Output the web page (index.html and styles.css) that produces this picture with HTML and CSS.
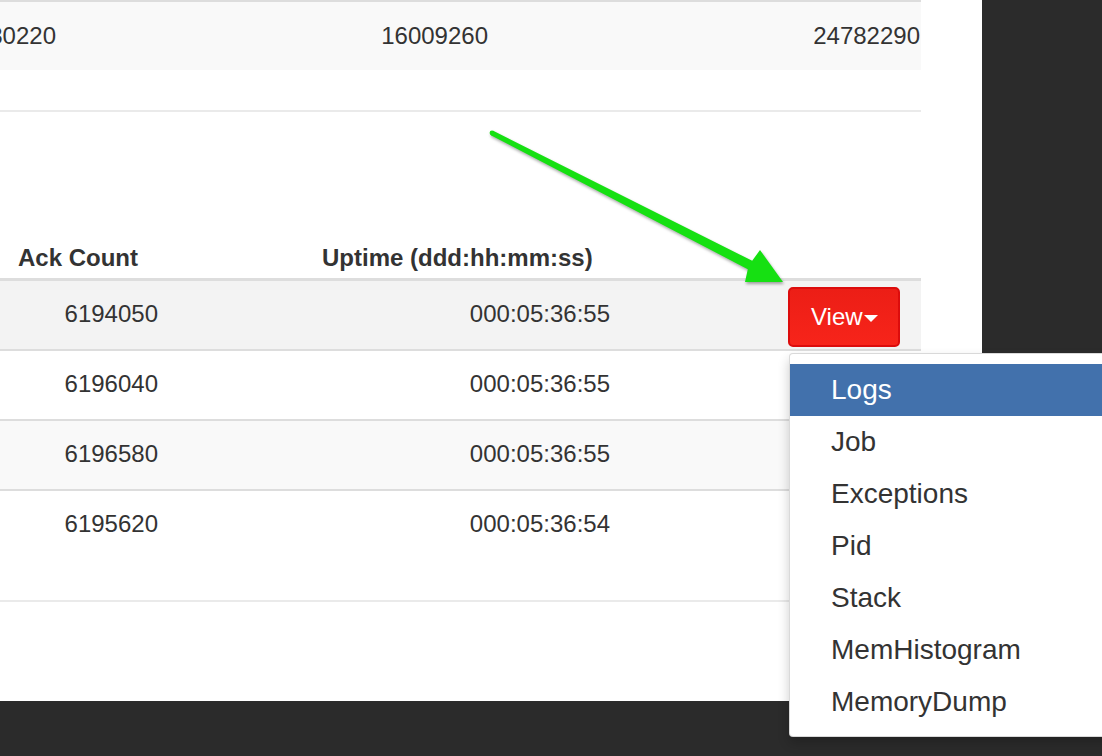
FILE: index.html
```html
<!DOCTYPE html>
<html lang="en">
<head>
<meta charset="utf-8">
<title>Topology workers</title>
<link rel="stylesheet" href="styles.css">
</head>
<body>
<div class="screen">
  <main class="content">
    <section class="panel">
      <div class="summary-row">
        <div class="cell cut">1580220</div>
        <div class="cell">16009260</div>
        <div class="cell">24782290</div>
      </div>
      <div class="summary-gap"></div>

      <div class="table">
        <div class="thead">
          <div class="th th-ack">Ack Count</div>
          <div class="th th-up">Uptime (ddd:hh:mm:ss)</div>
          <div class="th"></div>
        </div>

        <div class="tr tr-hover">
          <div class="td td-ack">6194050</div>
          <div class="td td-up">000:05:36:55</div>
          <div class="td td-action">
            <div class="dropdown">
              <button class="btn-view" type="button">View<span class="caret"></span></button>
              <ul class="menu">
                <li class="menu-item active">Logs</li>
                <li class="menu-item">Job</li>
                <li class="menu-item">Exceptions</li>
                <li class="menu-item">Pid</li>
                <li class="menu-item">Stack</li>
                <li class="menu-item">MemHistogram</li>
                <li class="menu-item">MemoryDump</li>
              </ul>
            </div>
          </div>
        </div>

        <div class="tr">
          <div class="td td-ack">6196040</div>
          <div class="td td-up">000:05:36:55</div>
          <div class="td td-action"></div>
        </div>

        <div class="tr tr-striped">
          <div class="td td-ack">6196580</div>
          <div class="td td-up">000:05:36:55</div>
          <div class="td td-action"></div>
        </div>

        <div class="tr tr-last">
          <div class="td td-ack">6195620</div>
          <div class="td td-up">000:05:36:54</div>
          <div class="td td-action"></div>
        </div>
      </div>

      <div class="panel-end"></div>
    </section>
  </main>
  <aside class="side"></aside>
  <footer class="footer"></footer>
</div>

<svg class="arrow" width="1102" height="756" viewBox="0 0 1102 756" aria-hidden="true">
  <polygon fill="#16e012" points="493.2,130.8 752.2,260.8 760,250 783,282 745,282 747.8,269.2 490.8,135.2"/>
  <circle cx="492" cy="133" r="2.4" fill="#16e012"/>
</svg>
</body>
</html>
```

FILE: styles.css
```css
* {
  box-sizing: border-box;
}

html, body {
  margin: 0;
  padding: 0;
}

body {
  width: 1102px;
  height: 756px;
  overflow: hidden;
  position: relative;
  background: #2b2b2b;
  font-family: "Liberation Sans", Arial, Helvetica, sans-serif;
  color: #333333;
}

.screen {
  display: grid;
  grid-template-columns: 982px 1fr;
  grid-template-rows: 701px 55px;
  height: 756px;
}

.content {
  grid-column: 1;
  grid-row: 1;
  background: #ffffff;
}

.side {
  grid-column: 2;
  grid-row: 1;
  background: #2b2b2b;
}

.footer {
  grid-column: 1 / span 2;
  grid-row: 2;
  background: #2b2b2b;
}

.panel {
  width: 921px;
}

/* summary row (top) */
.summary-row {
  display: grid;
  grid-template-columns: 57px 432px 1fr;
  align-items: center;
  height: 70px;
  border-top: 2px solid #dddddd;
  background: #f9f9f9;
  font-size: 24px;
}

.cell {
  display: flex;
  justify-content: flex-end;
  white-space: nowrap;
  overflow: hidden;
  padding-right: 1px;
}

.summary-gap {
  height: 42px;
  border-bottom: 2px solid #eaeaea;
}

/* table */
.table {
  margin-top: 126px;
  font-size: 24px;
}

.thead {
  display: grid;
  grid-template-columns: 170px 450px 1fr;
  align-items: center;
  height: 43px;
  border-bottom: 3px solid #dddddd;
  font-weight: bold;
}

.th-ack {
  padding-left: 18px;
}

.th-up {
  padding-left: 152px;
}

.tr {
  display: grid;
  grid-template-columns: 170px 450px 1fr;
  align-items: center;
  height: 70px;
  padding-bottom: 2px;
  border-bottom: 2px solid #dddddd;
  background: #ffffff;
}

.tr-hover {
  background: #f3f3f3;
}

.tr-striped {
  background: #f9f9f9;
}

.tr-last {
  border-bottom: none;
  height: 68px;
}

.td-ack {
  text-align: right;
  padding-right: 12px;
}

.td-up {
  text-align: right;
  padding-right: 10px;
}

.td-action {
  padding-left: 168px;
}

.panel-end {
  margin-top: 41px;
  border-top: 2px solid #eaeaea;
}

/* button + dropdown */
.dropdown {
  position: relative;
  display: inline-block;
  margin-top: 6px;
}

.btn-view {
  display: flex;
  align-items: center;
  height: 60px;
  padding: 0 20px 0 21px;
  border: 2px solid #dc0c0c;
  border-radius: 5px;
  background: linear-gradient(#ec1e16, #f7241a);
  color: #ffffff;
  font-family: "Liberation Sans", Arial, Helvetica, sans-serif;
  font-size: 24px;
  line-height: 56px;
}

.caret {
  display: inline-block;
  width: 0;
  height: 0;
  margin-left: 1px;
  margin-top: 3px;
  border-top: 7px solid #ffffff;
  border-left: 7px solid transparent;
  border-right: 7px solid transparent;
}

.menu {
  position: absolute;
  top: calc(100% + 6px);
  left: 1px;
  z-index: 10;
  width: 340px;
  margin: 0;
  padding: 10px 0 8px;
  list-style: none;
  background: #ffffff;
  border: 1px solid rgba(0, 0, 0, 0.15);
  border-radius: 4px;
  box-shadow: 0 6px 12px rgba(0, 0, 0, 0.2);
}

.menu-item {
  height: 52px;
  line-height: 52px;
  padding-left: 41px;
  font-size: 28px;
  color: #333333;
  white-space: nowrap;
}

.menu-item.active {
  background: #4271ac;
  color: #ffffff;
}

/* annotation arrow */
.arrow {
  position: absolute;
  top: 0;
  left: 0;
  pointer-events: none;
  filter: drop-shadow(1px 2px 1.5px rgba(0, 0, 0, 0.35));
}
```
